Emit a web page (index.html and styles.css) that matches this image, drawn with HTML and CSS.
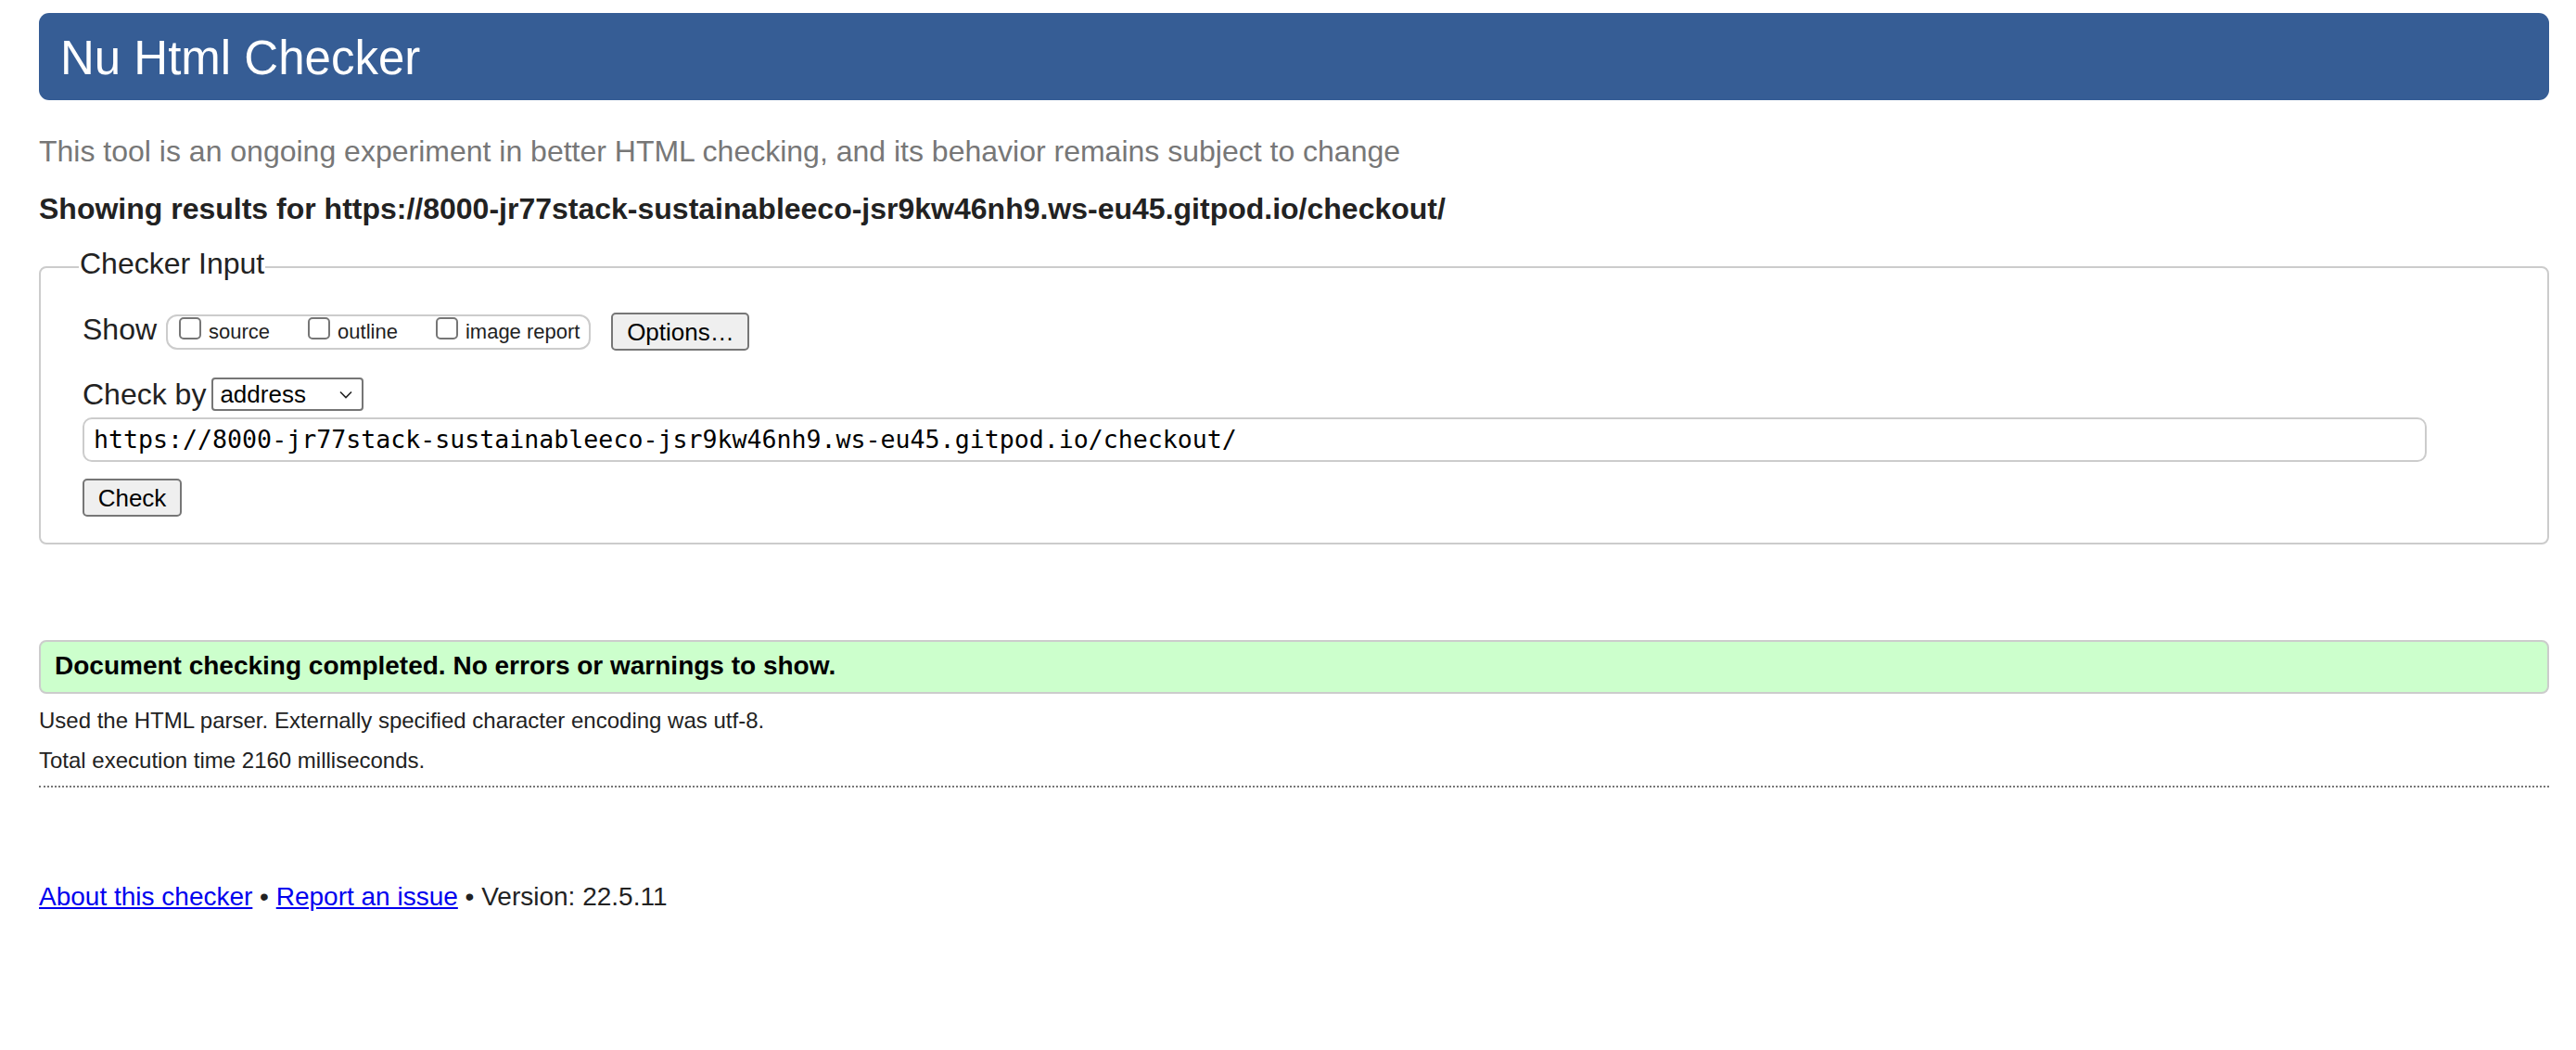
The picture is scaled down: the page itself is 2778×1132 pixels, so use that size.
FILE: index.html
```html
<!DOCTYPE html>
<html lang="en">
<head>
<meta charset="utf-8">
<title>Nu Html Checker</title>
<link rel="stylesheet" href="styles.css">
</head>
<body>
<h1 class="title">Nu Html Checker</h1>
<p class="intro">This tool is an ongoing experiment in better HTML checking, and its behavior remains subject to change</p>
<p class="showing">Showing results for https://8000-jr77stack-sustainableeco-jsr9kw46nh9.ws-eu45.gitpod.io/checkout/</p>
<form class="form">
  <fieldset class="checker">
    <legend class="legend">Checker Input</legend>
    <div class="row show-row">
      <span class="row-label">Show</span>
      <div class="show-group">
        <label class="opt"><input type="checkbox" class="cb"><span class="opt-text">source</span></label>
        <label class="opt"><input type="checkbox" class="cb"><span class="opt-text">outline</span></label>
        <label class="opt last"><input type="checkbox" class="cb"><span class="opt-text">image report</span></label>
      </div>
      <button type="button" class="btn options">Options…</button>
    </div>
    <div class="row by-row">
      <span class="row-label">Check by</span>
      <div class="select">
        <span class="select-text">address</span>
        <svg class="chev" width="14" height="9" viewBox="0 0 14 9"><path d="M1 1.5 L7 7.5 L13 1.5" fill="none" stroke="#222" stroke-width="1.6"/></svg>
      </div>
    </div>
    <div class="url">https://8000-jr77stack-sustainableeco-jsr9kw46nh9.ws-eu45.gitpod.io/checkout/</div>
    <button type="button" class="btn check">Check</button>
  </fieldset>
</form>
<p class="success">Document checking completed. No errors or warnings to show.</p>
<p class="details">Used the HTML parser. Externally specified character encoding was utf-8.</p>
<p class="details">Total execution time 2160 milliseconds.</p>
<hr class="dots">
<p class="footer"><a href="#" class="link">About this checker</a> • <a href="#" class="link">Report an issue</a> • Version: 22.5.11</p>
</body>
</html>
```

FILE: styles.css
```css
html {
  background: #fff;
}
body {
  margin: 0;
  padding: 14px 29px 40px 42px;
  font-family: "Liberation Sans", Arial, Helvetica, sans-serif;
  color: #222;
}
.title {
  margin: 0;
  height: 94px;
  box-sizing: border-box;
  padding: 18px 23px 15px;
  font-size: 51px;
  line-height: 61px;
  font-weight: normal;
  color: #fff;
  background: #365d95;
  border-radius: 11px;
}
.intro {
  margin: 37px 0 0;
  font-size: 32px;
  line-height: 37px;
  color: #777;
}
.showing {
  margin: 25px 0 0;
  font-size: 32px;
  line-height: 37px;
  font-weight: bold;
  color: #222;
}
.form {
  margin: 25px 0 0;
}
.checker {
  margin: 0;
  padding: 30px 20px 28px 45px;
  border: 2px solid #ccc;
  border-radius: 8px;
  min-width: 0;
}
.legend {
  margin-left: -4px;
  padding: 0 1px 8px;
  font-size: 32px;
  line-height: 30px;
  color: #222;
}
.row {
  display: flex;
  align-items: center;
}
.show-row {
  height: 41px;
}
.row-label {
  font-size: 32px;
  line-height: 37px;
  color: #222;
}
.show-row .row-label {
  margin-bottom: 5px;
}
.show-group {
  display: flex;
  align-items: flex-start;
  box-sizing: border-box;
  height: 38px;
  margin-left: 10px;
  padding: 1px 10px 0 12px;
  border: 2px solid #ccc;
  border-radius: 12px;
}
.opt {
  display: flex;
  align-items: flex-start;
  margin-right: 41px;
}
.opt.last {
  margin-right: 0;
}
.cb {
  appearance: none;
  -webkit-appearance: none;
  box-sizing: border-box;
  width: 24px;
  height: 24px;
  margin: 0 8px 0 0;
  border: 2px solid #767676;
  border-radius: 5px;
  background: #fff;
}
.opt-text {
  margin-top: 3px;
  font-size: 22px;
  line-height: 26px;
  color: #222;
}
.btn {
  font-family: "Liberation Sans", Arial, Helvetica, sans-serif;
  font-size: 26px;
  line-height: 30px;
  color: #000;
  background: #efefef;
  border: 2px solid #767676;
  border-radius: 5px;
  box-sizing: border-box;
  height: 41px;
  padding: 0 12px;
}
.options {
  margin-left: 22px;
  width: 149px;
}
.by-row {
  margin-top: 29px;
  height: 36px;
}
.select {
  display: flex;
  align-items: center;
  justify-content: space-between;
  box-sizing: border-box;
  width: 164px;
  height: 36px;
  margin-left: 6px;
  padding: 0 10px 0 7px;
  border: 2px solid #767676;
  border-radius: 4px;
  background: #fff;
}
.select-text {
  font-size: 26px;
  line-height: 30px;
  color: #000;
}
.chev {
  display: block;
}
.url {
  box-sizing: border-box;
  margin-top: 7px;
  width: 2528px;
  height: 48px;
  padding: 0 10px;
  border: 2px solid #ccc;
  border-radius: 10px;
  font-family: "DejaVu Sans Mono", "Liberation Mono", monospace;
  font-size: 26.6px;
  line-height: 44px;
  color: #000;
  white-space: nowrap;
}
.check {
  display: block;
  margin-top: 18px;
  width: 107px;
}
.success {
  margin: 103px 0 0;
  padding: 10px 15px 12px;
  border: 2px solid #ccc;
  border-radius: 8px;
  background: #ccffcc;
  font-size: 28px;
  line-height: 32px;
  font-weight: bold;
  color: #000;
}
.details {
  margin: 15px 0 0;
  font-size: 24px;
  line-height: 28px;
  color: #222;
}
.dots {
  margin: 13px 0 0;
  height: 0;
  border: 0;
  border-top: 2px dotted #777;
}
.footer {
  margin: 101px 0 0;
  font-size: 28px;
  line-height: 33px;
  color: #222;
}
.link {
  color: #0000ee;
  text-decoration: underline;
}
```
